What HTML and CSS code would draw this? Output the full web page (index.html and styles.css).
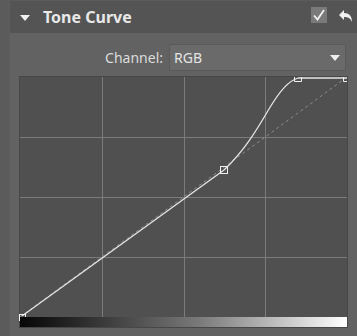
FILE: index.html
```html
<!DOCTYPE html>
<html lang="en">
<head>
    <meta charset="UTF-8">
    <title>Tone Curve</title>
    <link rel="stylesheet" href="styles.css">
</head>
<body>
    <div class="panel">
        <div class="header">
            <span class="caret"></span>
            <h2>Tone Curve</h2>
            <span class="enable">
                <svg width="16" height="16" viewBox="0 0 16 16"><path d="M3 8.5 L6.5 12.5 L13 3" fill="none" stroke="#f2f2f2" stroke-width="1.8"/></svg>
            </span>
            <span class="reset">
                <svg width="15" height="14" viewBox="0 0 15 14"><path d="M6 1 L1 6 L6 11 V8 C10 8 12.5 9 14 13 C14 7 11 4 6 4 Z" fill="#f0f0f0"/></svg>
            </span>
        </div>

        <div class="channel-row">
            <label>Channel:</label>
            <div class="select">
                <span>RGB</span>
                <span class="arrow"></span>
            </div>
        </div>

        <div class="curve-box">
            <svg class="curve" width="327" height="240" viewBox="0 0 327 240">
                <!-- grid -->
                <g stroke="#7b7b7b" stroke-width="1">
                    <line x1="82.5" y1="0" x2="82.5" y2="240"/>
                    <line x1="164.5" y1="0" x2="164.5" y2="240"/>
                    <line x1="245.5" y1="0" x2="245.5" y2="240"/>
                    <line x1="0" y1="60.5" x2="327" y2="60.5"/>
                    <line x1="0" y1="120.5" x2="327" y2="120.5"/>
                    <line x1="0" y1="180.5" x2="327" y2="180.5"/>
                </g>
                <line x1="0" y1="240" x2="327" y2="0" stroke="#8c8c8c" stroke-width="1" stroke-dasharray="3 3"/>
                <path d="M2 239 L204 93 C226 72 239 49 249 32 C261 12 269 4 278 1 L327 1" fill="none" stroke="#e4e4e4" stroke-width="1.3"/>
                <g fill="none" stroke="#f0f0f0" stroke-width="1">
                    <rect x="-0.5" y="237.5" width="6" height="6"/>
                    <rect x="200.5" y="89.5" width="7" height="7"/>
                    <path d="M274.5 0 V4.5 H281.5 V0"/>
                    <path d="M323.5 0 V4.5 H327"/>
                </g>
            </svg>
            <div class="ramp"></div>
        </div>
    </div>
</body>
</html>
```

FILE: styles.css
```css
body {
    margin: 0;
    background: #5b5b5b;
    font-family: 'Noto Sans', 'Open Sans', sans-serif;
    color: #e2e2e2;
}

.panel {
    margin-left: 9px;
    height: 336px;
    background: #626262;
    border-left: 1px solid #5e5e5e;
    box-sizing: border-box;
}

.header {
    height: 32px;
    margin-top: 1px;
    background: #545454;
    display: flex;
    align-items: center;
    padding: 0 4px 0 10px;
}

.caret {
    width: 0;
    height: 0;
    border-left: 5px solid transparent;
    border-right: 5px solid transparent;
    border-top: 6px solid #f2f2f2;
    margin-top: 1px;
}

.header h2 {
    margin: 0 0 0 13px;
    font-size: 16px;
    font-weight: 700;
    color: #e8e8e8;
    flex-grow: 1;
}

.enable {
    width: 16px;
    height: 16px;
    background: #7a7a7a;
    display: flex;
    margin-top: -4px;
}

.reset {
    display: flex;
    margin-left: 11px;
    margin-top: -3px;
}

.channel-row {
    display: flex;
    justify-content: flex-end;
    align-items: center;
    margin-top: 11px;
    padding-right: 11px;
}

.channel-row label {
    font-size: 14px;
    color: #dcdcdc;
    margin-right: 6px;
}

.select {
    width: 177px;
    height: 27px;
    box-sizing: border-box;
    background: #6a6a6a;
    border: 1px solid #5a5a5a;
    display: flex;
    align-items: center;
    justify-content: space-between;
    padding: 0 5px 0 4px;
    font-size: 14px;
    color: #e4e4e4;
}

.select .arrow {
    width: 0;
    height: 0;
    border-left: 5px solid transparent;
    border-right: 5px solid transparent;
    border-top: 6px solid #eeeeee;
}

.curve-box {
    margin: 5px 0 0 9px;
    width: 327px;
    border: 1px solid #474747;
    display: flex;
    flex-direction: column;
}

.curve {
    display: block;
    background: #505050;
    overflow: visible;
}

.ramp {
    height: 10px;
    background: linear-gradient(to right, #080808 0%, #151515 8%, #7a7a7a 55%, #ffffff 100%);
}
```
